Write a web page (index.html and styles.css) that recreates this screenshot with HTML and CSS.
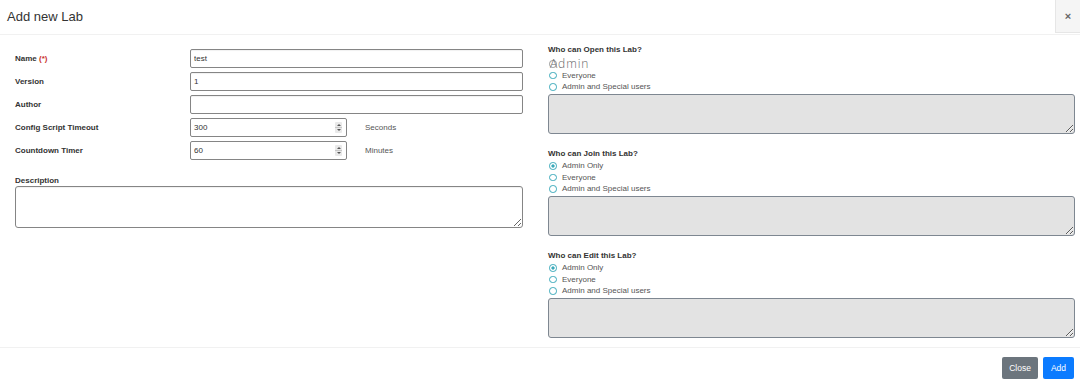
FILE: index.html
```html
<!DOCTYPE html>
<html lang="en">
<head>
    <meta charset="UTF-8">
    <meta name="viewport" content="width=device-width, initial-scale=1.0">
    <title>Add new Lab</title>
    <link rel="stylesheet" href="styles.css">
</head>
<body>
    <div class="modal">
        <div class="modal-header">
            <h4 class="modal-title">Add new Lab</h4>
            <button class="close">&times;</button>
        </div>

        <div class="modal-body">
            <div class="left-col">
                <div class="form-row">
                    <label>Name <span class="required">(*)</span></label>
                    <input type="text" class="form-input" value="test">
                </div>
                <div class="form-row">
                    <label>Version</label>
                    <input type="text" class="form-input" value="1">
                </div>
                <div class="form-row">
                    <label>Author</label>
                    <input type="text" class="form-input" value="">
                </div>
                <div class="form-row">
                    <label>Config Script Timeout</label>
                    <div class="spin-input">
                        <input type="text" value="300">
                        <span class="spinner"></span>
                    </div>
                    <span class="unit">Seconds</span>
                </div>
                <div class="form-row">
                    <label>Countdown Timer</label>
                    <div class="spin-input">
                        <input type="text" value="60">
                        <span class="spinner"></span>
                    </div>
                    <span class="unit">Minutes</span>
                </div>

                <div class="description">
                    <label>Description</label>
                    <textarea class="desc-box"></textarea>
                </div>
            </div>

            <div class="right-col">
                <div class="perm-group">
                    <div class="perm-title">Who can Open this Lab?</div>
                    <div class="radio-row glitch">
                        <span class="radio"></span>
                        <span class="big-text">Admin</span>
                    </div>
                    <div class="radio-row"><span class="radio"></span>Everyone</div>
                    <div class="radio-row"><span class="radio"></span>Admin and Special users</div>
                    <textarea class="users-box" disabled></textarea>
                </div>

                <div class="perm-group">
                    <div class="perm-title">Who can Join this Lab?</div>
                    <div class="radio-row"><span class="radio checked"></span>Admin Only</div>
                    <div class="radio-row"><span class="radio"></span>Everyone</div>
                    <div class="radio-row"><span class="radio"></span>Admin and Special users</div>
                    <textarea class="users-box" disabled></textarea>
                </div>

                <div class="perm-group">
                    <div class="perm-title">Who can Edit this Lab?</div>
                    <div class="radio-row"><span class="radio checked"></span>Admin Only</div>
                    <div class="radio-row"><span class="radio"></span>Everyone</div>
                    <div class="radio-row"><span class="radio"></span>Admin and Special users</div>
                    <textarea class="users-box" disabled></textarea>
                </div>
            </div>
        </div>

        <div class="modal-footer">
            <button class="btn btn-secondary">Close</button>
            <button class="btn btn-primary">Add</button>
        </div>
    </div>
</body>
</html>
```

FILE: styles.css
```css
body {
    margin: 0;
    font-family: 'Liberation Sans', Arial, sans-serif;
    color: #333;
    background-color: #fff;
}

.modal {
    width: 1080px;
    height: 388px;
    display: flex;
    flex-direction: column;
}

.modal-header {
    height: 34px;
    flex-shrink: 0;
    border-bottom: 1px solid #f1f1f1;
    display: flex;
    justify-content: space-between;
    align-items: flex-start;
}

.modal-title {
    margin: 0;
    padding: 9px 0 0 7px;
    font-size: 13px;
    font-weight: normal;
    color: #333;
}

.close {
    width: 25px;
    height: 33px;
    padding: 0;
    border: 1px solid #e6e6e6;
    border-top: none;
    border-right: none;
    background-color: #f5f5f5;
    color: #666;
    font-family: 'Liberation Sans', Arial, sans-serif;
    font-size: 11px;
    font-weight: bold;
}

.modal-body {
    flex: 1;
    min-height: 0;
    display: flex;
    gap: 25px;
    padding: 9px 5px 0 15px;
}

.left-col {
    width: 508px;
    padding-top: 5px;
}

.form-row {
    display: flex;
    align-items: center;
    height: 19px;
    margin-bottom: 4px;
}

.form-row label {
    width: 175px;
    font-size: 8px;
    font-weight: bold;
    color: #333;
}

.required {
    color: #c9302c;
}

.form-input {
    width: 333px;
    height: 19px;
    box-sizing: border-box;
    border: 1px solid #858585;
    border-radius: 2px;
    padding: 0 3px;
    font-family: 'Liberation Sans', Arial, sans-serif;
    font-size: 8px;
    color: #333;
    box-shadow: inset 0 1px 1px rgba(0, 0, 0, 0.06);
    outline: none;
}

.spin-input {
    width: 157px;
    height: 19px;
    box-sizing: border-box;
    border: 1px solid #858585;
    border-radius: 2px;
    display: flex;
    align-items: center;
    padding: 0 4px 0 3px;
}

.spin-input input {
    flex: 1;
    min-width: 0;
    border: none;
    padding: 0;
    font-family: 'Liberation Sans', Arial, sans-serif;
    font-size: 8px;
    color: #333;
    outline: none;
}

.spinner {
    width: 7px;
    height: 11px;
    background:
        linear-gradient(#c8c8c8, #c8c8c8) center / 7px 1px no-repeat,
        #e9e9e9;
    border-radius: 1px;
    position: relative;
}

.spinner:before,
.spinner:after {
    content: "";
    position: absolute;
    left: 1.5px;
    border-left: 2px solid transparent;
    border-right: 2px solid transparent;
}

.spinner:before {
    top: 2px;
    border-bottom: 2px solid #555;
}

.spinner:after {
    bottom: 2px;
    border-top: 2px solid #555;
}

.unit {
    margin-left: 18px;
    font-size: 8px;
    color: #555;
}

.description {
    margin-top: 16px;
}

.description label {
    display: block;
    font-size: 8px;
    font-weight: bold;
    margin-bottom: 1px;
}

.desc-box {
    display: block;
    width: 508px;
    height: 42px;
    box-sizing: border-box;
    border: 1px solid #858585;
    border-radius: 3px;
    margin: 0;
    box-shadow: inset 0 1px 1px rgba(0, 0, 0, 0.06);
}

.right-col {
    width: 527px;
    display: flex;
    flex-direction: column;
    gap: 14.5px;
}

.perm-title {
    font-size: 8px;
    font-weight: bold;
    line-height: 11px;
    color: #333;
    margin-bottom: 1px;
}

.radio-row {
    display: flex;
    align-items: center;
    height: 11.5px;
    font-size: 8px;
    color: #555;
}

.radio {
    width: 5.5px;
    height: 5.5px;
    border: 1.4px solid #3aa9ba;
    border-radius: 50%;
    margin: 0 5.5px 0 1px;
    flex-shrink: 0;
}

.radio.checked {
    background: radial-gradient(circle, #3aa9ba 0 1.4px, transparent 1.8px);
}

.radio-row.glitch {
    height: 13.5px;
    position: relative;
}

.glitch .radio {
    border-color: #999;
    margin-top: 2px;
}

.big-text {
    position: absolute;
    left: 2px;
    top: -1px;
    font-family: 'Open Sans', 'Liberation Sans', sans-serif;
    font-weight: 300;
    font-size: 12px;
    letter-spacing: 0.9px;
    color: #666;
}

.users-box {
    display: block;
    width: 527px;
    height: 40px;
    box-sizing: border-box;
    margin: 1px 0 0;
    background-color: #e3e3e3;
    border: 1px solid #7e8791;
    border-radius: 3px;
}

.modal-footer {
    flex-shrink: 0;
    height: 31px;
    border-top: 1px solid #f1f1f1;
    padding: 9px 6px 0 0;
    display: flex;
    justify-content: flex-end;
    align-items: flex-start;
    gap: 5px;
}

.btn {
    height: 22px;
    border: none;
    border-radius: 2px;
    color: #fff;
    font-family: 'Liberation Sans', Arial, sans-serif;
    font-size: 8.5px;
    padding: 0;
}

.btn-secondary {
    width: 36px;
    background-color: #6c757d;
}

.btn-primary {
    width: 31px;
    background-color: #0b7bff;
}
```
